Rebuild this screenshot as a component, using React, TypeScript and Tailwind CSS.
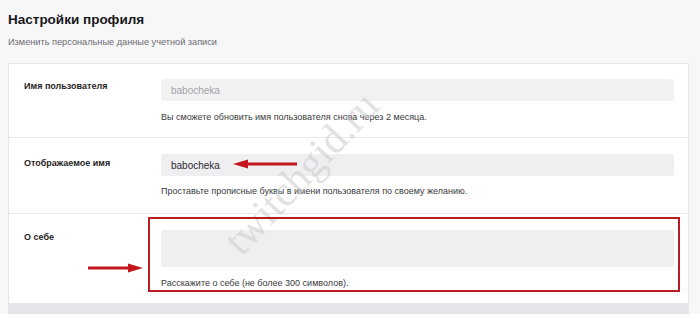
import React from 'react'

const font = { fontFamily: '"Liberation Sans", Arial, sans-serif' }

function Row({
  label,
  labelTop,
  children,
  hint,
  top,
  hintGap,
  bottom,
  last,
}: {
  label: string
  labelTop: string
  children: React.ReactNode
  hint: string
  top: string
  hintGap: string
  bottom: string
  last?: boolean
}) {
  return (
    <div className={`flex ${top} ${bottom} ${last ? '' : 'border-b border-[#e9e9ec]'}`}>
      <div className={`w-[152px] shrink-0 pl-[15px] ${labelTop} text-[9px] font-bold leading-[12px] text-[#1f1f23]`}>
        {label}
      </div>
      <div className="mr-[14px] flex-1">
        {children}
        <div className={`${hintGap} text-[9px] leading-[12px] text-[#3a3a3d]`}>{hint}</div>
      </div>
    </div>
  )
}

export default function App() {
  return (
    <div className="relative h-[314px] w-[700px] overflow-hidden bg-[#f7f7f8]" style={font}>
      <div className="px-2 pt-[12px]">
        <div className="text-[13.5px] font-bold leading-[16px] text-[#18181b]">Настройки профиля</div>
        <div className="mt-[8px] text-[9.2px] leading-[12px] text-[#6b6b70]">
          Изменить персональные данные учетной записи
        </div>
      </div>

      <div className="ml-2 mt-[15px] w-[681px] border border-[#e6e6ea] bg-white">
        <Row
          label="Имя пользователя"
          labelTop="pt-[1px]"
          hint="Вы сможете обновить имя пользователя снова через 2 месяца."
          top="pt-[15px]"
          hintGap="mt-[10px]"
          bottom="pb-[14px]"
        >
          <div className="flex h-[22px] items-center rounded-[3px] bg-[#f2f2f3] px-[10px] text-[10px] text-[#a3a3a8]">
            babocheka
          </div>
        </Row>
        <Row
          label="Отображаемое имя"
          labelTop="pt-[3px]"
          hint="Проставьте прописные буквы в имени пользователя по своему желанию."
          top="pt-[16px]"
          hintGap="mt-[9px]"
          bottom="pb-[16px]"
        >
          <div className="flex h-[22px] items-center rounded-[3px] bg-[#efeff1] px-[10px] text-[10px] text-[#2b2b2f]">
            babocheka
          </div>
        </Row>
        <Row
          label="О себе"
          labelTop="pt-[1px]"
          hint="Расскажите о себе (не более 300 символов)."
          top="pt-[16px]"
          hintGap="mt-[10px]"
          bottom="pb-[14px]"
          last
        >
          <div className="h-[37px] rounded-[3px] bg-[#efeff0]" />
        </Row>
      </div>
      <div className="ml-2 h-[12px] w-[681px] bg-[#e5e5e9]" />

      {/* watermark */}
      <div
        className="pointer-events-none absolute left-[199px] top-[152px] -rotate-[47deg] text-[42px] leading-[42px] text-[#cfcfd3] opacity-60"
        style={{ fontFamily: '"Liberation Serif", "Times New Roman", serif' }}
      >
        twitchgid.ru
      </div>

      {/* red highlight box */}
      <div className="pointer-events-none absolute left-[148px] top-[217px] h-[75px] w-[532px] border-2 border-[#b81d24]" />

      {/* arrows */}
      <svg className="absolute left-[86px] top-[262px]" width="60" height="12" viewBox="0 0 60 12">
        <line x1="2" y1="6" x2="46" y2="6" stroke="#c4161c" strokeWidth="3" />
        <polygon points="42,1.5 57,6 42,10.5" fill="#c4161c" />
      </svg>
      <svg className="absolute left-[231px] top-[158px]" width="68" height="12" viewBox="0 0 68 12">
        <line x1="14" y1="6" x2="66" y2="6" stroke="#c4161c" strokeWidth="3" />
        <polygon points="17,1.5 2,6 17,10.5" fill="#c4161c" />
      </svg>
    </div>
  )
}
